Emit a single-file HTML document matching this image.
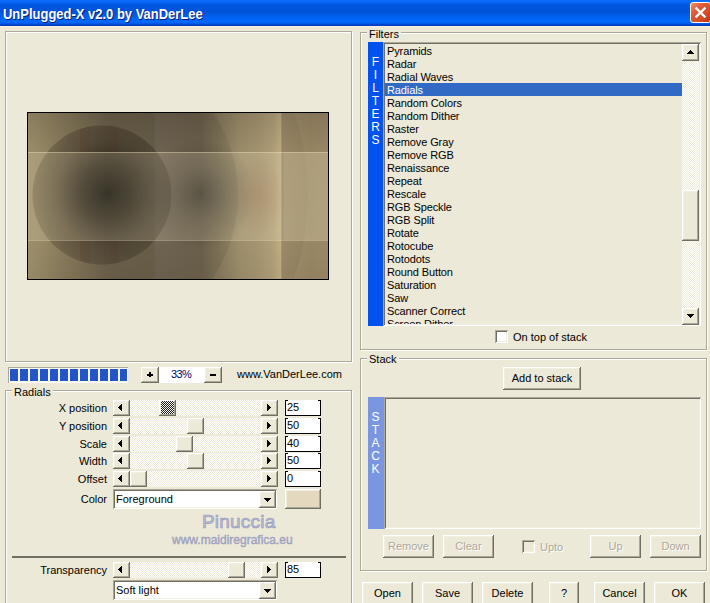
<!DOCTYPE html>
<html><head><meta charset="utf-8"><style>
*{margin:0;padding:0;box-sizing:border-box}
html,body{width:710px;height:603px;overflow:hidden;background:#ECE9D8;font-family:"Liberation Sans",sans-serif;font-size:11px;color:#000}
body>div,body>svg{position:absolute}
.tx{position:absolute;white-space:nowrap;line-height:13px}
.ttl{position:absolute;white-space:nowrap;font-weight:bold;font-size:15px;line-height:17px;color:#fff;letter-spacing:0px;transform:scaleX(0.865);transform-origin:0 0;text-shadow:1px 1px 0 #0A1A70}
#title{left:0;top:0;width:710px;height:26px;background:linear-gradient(to bottom,#0C6EFC 0,#0A68F6 2px,#0056DE 5px,#0053D8 12px,#0062F0 17px,#0069FA 22px,#0062F2 23px,#0048D0 24.5px,#0036B4 26px)}
#close{left:690px;top:2px;width:21px;height:21px;border:1px solid #fff;border-radius:3px;background:linear-gradient(135deg,#F08A6A 0,#E05A38 35%,#D44A24 70%,#B8360F 100%)}
#close svg{position:absolute;left:0;top:0}
.etch{border:1px solid #ACA899;box-shadow:inset 1px 1px 0 #fff,1px 1px 0 #fff}
.btn{background:#ECE9D8;box-shadow:inset -1px -1px 0 #716F64,inset 1px 1px 0 #fff,inset -2px -2px 0 #ACA899,inset 2px 2px 0 #F1EFE2}
.btn span{position:absolute;left:0;right:0;top:5px;text-align:center;white-space:nowrap;line-height:13px}
.sunk{box-shadow:inset 1px 1px 0 #ACA899,inset -1px -1px 0 #fff,inset 2px 2px 0 #716F64,inset -2px -2px 0 #F1EFE2}
.trk{background-color:#fff;background-image:conic-gradient(#ECE9D8 25%,#fff 0 50%,#ECE9D8 0 75%,#fff 0);background-size:2px 2px}
.hatch{background-color:#000;background-image:conic-gradient(#222 25%,#F4F3EA 0 50%,#222 0 75%,#F4F3EA 0);background-size:2px 2px}
.ar{position:absolute}
.plus{position:absolute;background:#000}
.prog{background:#FAFAF4;box-shadow:inset 1px 1px 0 #ACA899,inset -1px -1px 0 #fff}
.blk{background:#2455C6}
.lbl{right:603px;text-align:right}
.edit{background:#fff;border:1px solid #000;border-top-color:#fff}
.edit::before,.edit::after{content:"";position:absolute;top:-1px;width:3px;height:1px;background:#000}
.edit::before{left:-1px} .edit::after{right:-1px}
.edit span{position:absolute;left:1px;top:0px;line-height:13px}
.combo{background:#fff;box-shadow:inset 1px 1px 0 #ACA899,inset -1px -1px 0 #fff,inset 2px 2px 0 #716F64,inset -2px -2px 0 #F1EFE2}
.combo span{position:absolute;left:3px;top:4px;line-height:13px}
.vl{width:15px;text-align:center;color:#fff;font-size:12px}
#lst{left:385px;top:44px;width:297px;height:280px;overflow:hidden}
.it{position:absolute;left:0;width:297px;height:13px;line-height:13px;padding-left:2px;white-space:nowrap;letter-spacing:-0.12px}
.it span{position:relative;top:1px}
.sel{background:#316AC5;color:#fff}
.chk{background:#fff;box-shadow:inset 1px 1px 0 #ACA899,inset -1px -1px 0 #fff,inset 2px 2px 0 #716F64,inset -2px -2px 0 #F1EFE2}
#prev{left:27px;top:112px;width:302px;height:168px;border:1px solid #000;background:#8a7c60;overflow:hidden}
</style></head><body>
<div id="title"></div>
<div class="ttl" style="left:3px;top:5px;">UnPlugged-X v2.0 by VanDerLee</div>
<div id="close"><svg width="21" height="21" viewBox="0 0 21 21"><path d="M4.6 4.6L14.4 14.4M14.4 4.6L4.6 14.4" stroke="#fff" stroke-width="2.2"/></svg></div>
<div class="" style="left:0px;top:26px;width:710px;height:1px;background:#FBF1DE"></div>
<div class="etch" style="left:5px;top:31px;width:347px;height:331px;"></div>
<div id="prev"><svg width="301" height="167" viewBox="0 0 301 167" style="position:absolute;left:0;top:0">
<defs>
<linearGradient id="base" x1="0" y1="0" x2="301" y2="0" gradientUnits="userSpaceOnUse">
<stop offset="0.0" stop-color="#BAA87E"/>
<stop offset="0.0465" stop-color="#B0A078"/>
<stop offset="0.1395" stop-color="#9A8A68"/>
<stop offset="0.2724" stop-color="#7C7058"/>
<stop offset="0.4186" stop-color="#7A6E56"/>
<stop offset="0.4252" stop-color="#827660"/>
<stop offset="0.5714" stop-color="#7C7058"/>
<stop offset="0.7043" stop-color="#AA9A74"/>
<stop offset="0.7641" stop-color="#B4A27A"/>
<stop offset="0.8173" stop-color="#C2AE84"/>
<stop offset="0.8389" stop-color="#D0BC8E"/>
<stop offset="0.8439" stop-color="#A89470"/>
<stop offset="0.9369" stop-color="#9E8C68"/>
<stop offset="0.9967" stop-color="#A28E6A"/>
</linearGradient>
<radialGradient id="dk1" cx="80" cy="80" r="76" gradientUnits="userSpaceOnUse">
<stop offset="0" stop-color="#0C0A04" stop-opacity="0.95"/>
<stop offset="0.35" stop-color="#1A160C" stop-opacity="0.7"/>
<stop offset="0.7" stop-color="#2A2418" stop-opacity="0.3"/>
<stop offset="1" stop-color="#2A2418" stop-opacity="0.1"/>
</radialGradient>
<radialGradient id="dk2" cx="172" cy="81" r="56" gradientUnits="userSpaceOnUse">
<stop offset="0" stop-color="#22201A" stop-opacity="0.66"/>
<stop offset="0.5" stop-color="#36322A" stop-opacity="0.32"/>
<stop offset="1" stop-color="#36322A" stop-opacity="0"/>
</radialGradient>
<linearGradient id="vtop" x1="0" y1="0" x2="0" y2="167" gradientUnits="userSpaceOnUse">
<stop offset="0" stop-color="#000" stop-opacity="0.16"/>
<stop offset="0.23" stop-color="#000" stop-opacity="0.06"/>
<stop offset="0.77" stop-color="#000" stop-opacity="0.04"/>
<stop offset="1" stop-color="#000" stop-opacity="0.08"/>
</linearGradient>
<radialGradient id="red1" cx="230" cy="82" r="30" gradientUnits="userSpaceOnUse" gradientTransform="translate(230 82) scale(0.9 1.4) translate(-230 -82)">
<stop offset="0" stop-color="#7A4A32" stop-opacity="0.26"/>
<stop offset="1" stop-color="#7A4A32" stop-opacity="0"/>
</radialGradient>
<clipPath id="c1"><circle cx="74" cy="82" r="69.5"/></clipPath>
</defs>
<rect x="0" y="0" width="301" height="167" fill="url(#base)"/>
<circle cx="60" cy="82" r="150" fill="#000" fill-opacity="0.07"/>
<circle cx="27" cy="82" r="253" fill="#000" fill-opacity="0.04"/>
<circle cx="74" cy="82" r="69.5" fill="#2E1C12" fill-opacity="0.14"/>
<rect x="0" y="0" width="301" height="167" fill="url(#dk1)" clip-path="url(#c1)"/>
<rect x="0" y="0" width="301" height="167" fill="url(#dk2)"/>
<rect x="0" y="0" width="301" height="167" fill="url(#vtop)"/>
<rect x="0" y="0" width="301" height="167" fill="url(#red1)"/>
<g clip-path="url(#c1)">
<rect x="52" y="7" width="10" height="32" fill="#5A2E1E" fill-opacity="0.12"/>
<rect x="82" y="7" width="8" height="32" fill="#5A2E1E" fill-opacity="0.10"/>
<rect x="52" y="128" width="10" height="30" fill="#5A2E1E" fill-opacity="0.12"/>
<rect x="82" y="128" width="8" height="30" fill="#5A2E1E" fill-opacity="0.10"/>
</g>
<rect x="0" y="39" width="301" height="88" fill="#FFF2D0" fill-opacity="0.17"/>
<rect x="256" y="39" width="45" height="88" fill="#FFF2D0" fill-opacity="0.08"/>
<rect x="0" y="39" width="301" height="1" fill="#F0E2C0" fill-opacity="0.4"/>
<rect x="0" y="127" width="301" height="1" fill="#F0E2C0" fill-opacity="0.35"/>
</svg></div>
<div class="prog" style="left:8px;top:367px;width:120px;height:16px;"></div>
<div class="blk" style="left:10px;top:369px;width:8px;height:12px;"></div>
<div class="blk" style="left:20px;top:369px;width:8px;height:12px;"></div>
<div class="blk" style="left:30px;top:369px;width:8px;height:12px;"></div>
<div class="blk" style="left:40px;top:369px;width:8px;height:12px;"></div>
<div class="blk" style="left:50px;top:369px;width:8px;height:12px;"></div>
<div class="blk" style="left:60px;top:369px;width:8px;height:12px;"></div>
<div class="blk" style="left:70px;top:369px;width:8px;height:12px;"></div>
<div class="blk" style="left:80px;top:369px;width:8px;height:12px;"></div>
<div class="blk" style="left:90px;top:369px;width:8px;height:12px;"></div>
<div class="blk" style="left:100px;top:369px;width:8px;height:12px;"></div>
<div class="blk" style="left:110px;top:369px;width:8px;height:12px;"></div>
<div class="blk" style="left:120px;top:369px;width:7px;height:12px;"></div>
<div class="btn" style="left:141px;top:367px;width:18px;height:16px;"></div>
<div class="plus" style="left:147px;top:374px;width:6px;height:1.6px"></div>
<div class="plus" style="left:149px;top:372px;width:2px;height:5px"></div>
<div class="" style="left:159px;top:367px;width:45px;height:16px;background:#fff"></div>
<div class="tx" style="left:171px;top:368px;color:#000070;letter-spacing:-0.6px">33%</div>
<div class="btn" style="left:204px;top:367px;width:18px;height:16px;"></div>
<div class="plus" style="left:210px;top:374px;width:6px;height:1.6px"></div>
<div class="tx" style="left:237px;top:368px;">www.VanDerLee.com</div>
<div class="etch" style="left:5px;top:390px;width:347px;height:251px;"></div>
<div class="tx" style="left:12px;top:386px;background:#ECE9D8;padding:0 2px">Radials</div>
<div class="tx lbl" style="top:402px">X position</div>
<div class="trk" style="left:130px;top:400px;width:131px;height:16px;"></div>
<div class="btn" style="left:113px;top:400px;width:17px;height:16px;"></div>
<svg class="ar" style="left:118px;top:404px" width="4" height="7" fill="#000"><rect x="0" y="3" width="1" height="1"/><rect x="1" y="2" width="1" height="3"/><rect x="2" y="1" width="1" height="5"/><rect x="3" y="0" width="1" height="7"/></svg>
<div class="btn" style="left:261px;top:400px;width:17px;height:16px;"></div>
<svg class="ar" style="left:267px;top:404px" width="4" height="7" fill="#000"><rect x="3" y="3" width="1" height="1"/><rect x="2" y="2" width="1" height="3"/><rect x="1" y="1" width="1" height="5"/><rect x="0" y="0" width="1" height="7"/></svg>
<div class="btn" style="left:159px;top:400px;width:17px;height:16px;"></div>
<div class="hatch" style="left:161px;top:401px;width:13px;height:13px;"></div>
<div class="edit" style="left:285px;top:400px;width:36px;height:16px;"><span>25</span></div>
<div class="tx lbl" style="top:420px">Y position</div>
<div class="trk" style="left:130px;top:418px;width:131px;height:16px;"></div>
<div class="btn" style="left:113px;top:418px;width:17px;height:16px;"></div>
<svg class="ar" style="left:118px;top:422px" width="4" height="7" fill="#000"><rect x="0" y="3" width="1" height="1"/><rect x="1" y="2" width="1" height="3"/><rect x="2" y="1" width="1" height="5"/><rect x="3" y="0" width="1" height="7"/></svg>
<div class="btn" style="left:261px;top:418px;width:17px;height:16px;"></div>
<svg class="ar" style="left:267px;top:422px" width="4" height="7" fill="#000"><rect x="3" y="3" width="1" height="1"/><rect x="2" y="2" width="1" height="3"/><rect x="1" y="1" width="1" height="5"/><rect x="0" y="0" width="1" height="7"/></svg>
<div class="btn" style="left:187px;top:418px;width:17px;height:16px;"></div>
<div class="edit" style="left:285px;top:418px;width:36px;height:16px;"><span>50</span></div>
<div class="tx lbl" style="top:438px">Scale</div>
<div class="trk" style="left:130px;top:436px;width:131px;height:16px;"></div>
<div class="btn" style="left:113px;top:436px;width:17px;height:16px;"></div>
<svg class="ar" style="left:118px;top:440px" width="4" height="7" fill="#000"><rect x="0" y="3" width="1" height="1"/><rect x="1" y="2" width="1" height="3"/><rect x="2" y="1" width="1" height="5"/><rect x="3" y="0" width="1" height="7"/></svg>
<div class="btn" style="left:261px;top:436px;width:17px;height:16px;"></div>
<svg class="ar" style="left:267px;top:440px" width="4" height="7" fill="#000"><rect x="3" y="3" width="1" height="1"/><rect x="2" y="2" width="1" height="3"/><rect x="1" y="1" width="1" height="5"/><rect x="0" y="0" width="1" height="7"/></svg>
<div class="btn" style="left:176px;top:436px;width:17px;height:16px;"></div>
<div class="edit" style="left:285px;top:436px;width:36px;height:16px;"><span>40</span></div>
<div class="tx lbl" style="top:455px">Width</div>
<div class="trk" style="left:130px;top:453px;width:131px;height:16px;"></div>
<div class="btn" style="left:113px;top:453px;width:17px;height:16px;"></div>
<svg class="ar" style="left:118px;top:457px" width="4" height="7" fill="#000"><rect x="0" y="3" width="1" height="1"/><rect x="1" y="2" width="1" height="3"/><rect x="2" y="1" width="1" height="5"/><rect x="3" y="0" width="1" height="7"/></svg>
<div class="btn" style="left:261px;top:453px;width:17px;height:16px;"></div>
<svg class="ar" style="left:267px;top:457px" width="4" height="7" fill="#000"><rect x="3" y="3" width="1" height="1"/><rect x="2" y="2" width="1" height="3"/><rect x="1" y="1" width="1" height="5"/><rect x="0" y="0" width="1" height="7"/></svg>
<div class="btn" style="left:187px;top:453px;width:17px;height:16px;"></div>
<div class="edit" style="left:285px;top:453px;width:36px;height:16px;"><span>50</span></div>
<div class="tx lbl" style="top:473px">Offset</div>
<div class="trk" style="left:130px;top:471px;width:131px;height:16px;"></div>
<div class="btn" style="left:113px;top:471px;width:17px;height:16px;"></div>
<svg class="ar" style="left:118px;top:475px" width="4" height="7" fill="#000"><rect x="0" y="3" width="1" height="1"/><rect x="1" y="2" width="1" height="3"/><rect x="2" y="1" width="1" height="5"/><rect x="3" y="0" width="1" height="7"/></svg>
<div class="btn" style="left:261px;top:471px;width:17px;height:16px;"></div>
<svg class="ar" style="left:267px;top:475px" width="4" height="7" fill="#000"><rect x="3" y="3" width="1" height="1"/><rect x="2" y="2" width="1" height="3"/><rect x="1" y="1" width="1" height="5"/><rect x="0" y="0" width="1" height="7"/></svg>
<div class="btn" style="left:130px;top:471px;width:17px;height:16px;"></div>
<div class="edit" style="left:285px;top:471px;width:36px;height:16px;"><span>0</span></div>
<div class="tx lbl" style="top:493px">Color</div>
<div class="combo" style="left:113px;top:489px;width:164px;height:20px;"><span>Foreground</span></div>
<div class="btn" style="left:259px;top:491px;width:17px;height:17px;"></div>
<svg class="ar" style="left:264px;top:498px" width="7" height="4" fill="#000"><rect x="3" y="3" width="1" height="1"/><rect x="2" y="2" width="3" height="1"/><rect x="1" y="1" width="5" height="1"/><rect x="0" y="0" width="7" height="1"/></svg>
<div class="btn" style="left:285px;top:489px;width:36px;height:20px;background:#E4D9BE"></div>
<div class="tx" style="left:202px;top:511px;font-size:19px;line-height:22px;color:#BCBED8;letter-spacing:0.2px;-webkit-text-stroke:0.7px #9A9CBE">Pinuccia</div>
<div class="tx" style="left:172px;top:534px;font-size:12px;color:#A8AAC6;-webkit-text-stroke:0.4px #9A9CBC">www.maidiregrafica.eu</div>
<div class="" style="left:12px;top:556px;width:334px;height:2px;background:#716F64"></div>
<div class="tx lbl" style="top:564px">Transparency</div>
<div class="trk" style="left:130px;top:562px;width:131px;height:16px;"></div>
<div class="btn" style="left:113px;top:562px;width:17px;height:16px;"></div>
<svg class="ar" style="left:118px;top:566px" width="4" height="7" fill="#000"><rect x="0" y="3" width="1" height="1"/><rect x="1" y="2" width="1" height="3"/><rect x="2" y="1" width="1" height="5"/><rect x="3" y="0" width="1" height="7"/></svg>
<div class="btn" style="left:261px;top:562px;width:17px;height:16px;"></div>
<svg class="ar" style="left:267px;top:566px" width="4" height="7" fill="#000"><rect x="3" y="3" width="1" height="1"/><rect x="2" y="2" width="1" height="3"/><rect x="1" y="1" width="1" height="5"/><rect x="0" y="0" width="1" height="7"/></svg>
<div class="btn" style="left:228px;top:562px;width:17px;height:16px;"></div>
<div class="edit" style="left:285px;top:562px;width:36px;height:16px;"><span>85</span></div>
<div class="combo" style="left:113px;top:580px;width:164px;height:20px;"><span>Soft light</span></div>
<div class="btn" style="left:259px;top:582px;width:17px;height:17px;"></div>
<svg class="ar" style="left:264px;top:589px" width="7" height="4" fill="#000"><rect x="3" y="3" width="1" height="1"/><rect x="2" y="2" width="3" height="1"/><rect x="1" y="1" width="5" height="1"/><rect x="0" y="0" width="7" height="1"/></svg>
<div class="etch" style="left:360px;top:32px;width:347px;height:318px;"></div>
<div class="tx" style="left:367px;top:28px;background:#ECE9D8;padding:0 2px">Filters</div>
<div class="" style="left:368px;top:42px;width:15px;height:284px;background:#0352EE"></div>
<div class="tx vl" style="left:368px;top:56px">F</div>
<div class="tx vl" style="left:368px;top:69px">I</div>
<div class="tx vl" style="left:368px;top:82px">L</div>
<div class="tx vl" style="left:368px;top:95px">T</div>
<div class="tx vl" style="left:368px;top:108px">E</div>
<div class="tx vl" style="left:368px;top:121px">R</div>
<div class="tx vl" style="left:368px;top:134px">S</div>
<div class="sunk" style="left:383px;top:42px;width:318px;height:284px;"></div>
<div id="lst">
<div class="it" style="top:0px"><span>Pyramids</span></div>
<div class="it" style="top:13px"><span>Radar</span></div>
<div class="it" style="top:26px"><span>Radial Waves</span></div>
<div class="it sel" style="top:39px"><span>Radials</span></div>
<div class="it" style="top:52px"><span>Random Colors</span></div>
<div class="it" style="top:65px"><span>Random Dither</span></div>
<div class="it" style="top:78px"><span>Raster</span></div>
<div class="it" style="top:91px"><span>Remove Gray</span></div>
<div class="it" style="top:104px"><span>Remove RGB</span></div>
<div class="it" style="top:117px"><span>Renaissance</span></div>
<div class="it" style="top:130px"><span>Repeat</span></div>
<div class="it" style="top:143px"><span>Rescale</span></div>
<div class="it" style="top:156px"><span>RGB Speckle</span></div>
<div class="it" style="top:169px"><span>RGB Split</span></div>
<div class="it" style="top:182px"><span>Rotate</span></div>
<div class="it" style="top:195px"><span>Rotocube</span></div>
<div class="it" style="top:208px"><span>Rotodots</span></div>
<div class="it" style="top:221px"><span>Round Button</span></div>
<div class="it" style="top:234px"><span>Saturation</span></div>
<div class="it" style="top:247px"><span>Saw</span></div>
<div class="it" style="top:260px"><span>Scanner Correct</span></div>
<div class="it" style="top:273px"><span>Screen Dither</span></div>
</div>
<div class="trk" style="left:682px;top:44px;width:17px;height:280px;"></div>
<div class="btn" style="left:682px;top:44px;width:17px;height:17px;"></div>
<svg class="ar" style="left:687px;top:50px" width="7" height="4" fill="#000"><rect x="3" y="0" width="1" height="1"/><rect x="2" y="1" width="3" height="1"/><rect x="1" y="2" width="5" height="1"/><rect x="0" y="3" width="7" height="1"/></svg>
<div class="btn" style="left:682px;top:190px;width:17px;height:51px;"></div>
<div class="btn" style="left:682px;top:308px;width:17px;height:17px;"></div>
<svg class="ar" style="left:687px;top:314px" width="7" height="4" fill="#000"><rect x="3" y="3" width="1" height="1"/><rect x="2" y="2" width="3" height="1"/><rect x="1" y="1" width="5" height="1"/><rect x="0" y="0" width="7" height="1"/></svg>
<div class="chk" style="left:495px;top:330px;width:13px;height:13px;"></div>
<div class="tx" style="left:513px;top:331px;">On top of stack</div>
<div class="etch" style="left:360px;top:358px;width:347px;height:213px;"></div>
<div class="tx" style="left:367px;top:353px;background:#ECE9D8;padding:0 2px">Stack</div>
<div class="btn" style="left:503px;top:367px;width:78px;height:23px;"><span style="">Add to stack</span></div>
<div class="" style="left:368px;top:397px;width:16px;height:132px;background:#7A96E0"></div>
<div class="tx vl" style="left:368px;top:411px">S</div>
<div class="tx vl" style="left:368px;top:424px">T</div>
<div class="tx vl" style="left:368px;top:437px">A</div>
<div class="tx vl" style="left:368px;top:450px">C</div>
<div class="tx vl" style="left:368px;top:463px">K</div>
<div class="sunk" style="left:384px;top:397px;width:317px;height:132px;"></div>
<div class="btn" style="left:383px;top:535px;width:51px;height:23px;"><span style="color:#ACA899;text-shadow:1px 1px 0 #fff">Remove</span></div>
<div class="btn" style="left:443px;top:535px;width:51px;height:23px;"><span style="color:#ACA899;text-shadow:1px 1px 0 #fff">Clear</span></div>
<div class="chk" style="left:522px;top:540px;width:13px;height:13px;background:#ECE9D8"></div>
<div class="tx" style="left:540px;top:541px;color:#ACA899;text-shadow:1px 1px 0 #fff">Upto</div>
<div class="btn" style="left:590px;top:535px;width:51px;height:23px;"><span style="color:#ACA899;text-shadow:1px 1px 0 #fff">Up</span></div>
<div class="btn" style="left:650px;top:535px;width:51px;height:23px;"><span style="color:#ACA899;text-shadow:1px 1px 0 #fff">Down</span></div>
<div class="btn" style="left:362px;top:582px;width:51px;height:24px;"><span style="">Open</span></div>
<div class="btn" style="left:422px;top:582px;width:51px;height:24px;"><span style="">Save</span></div>
<div class="btn" style="left:482px;top:582px;width:51px;height:24px;"><span style="">Delete</span></div>
<div class="btn" style="left:549px;top:582px;width:30px;height:24px;"><span style="">?</span></div>
<div class="btn" style="left:594px;top:582px;width:51px;height:24px;"><span style="">Cancel</span></div>
<div class="btn" style="left:654px;top:582px;width:51px;height:24px;"><span style="">OK</span></div>
</body></html>
